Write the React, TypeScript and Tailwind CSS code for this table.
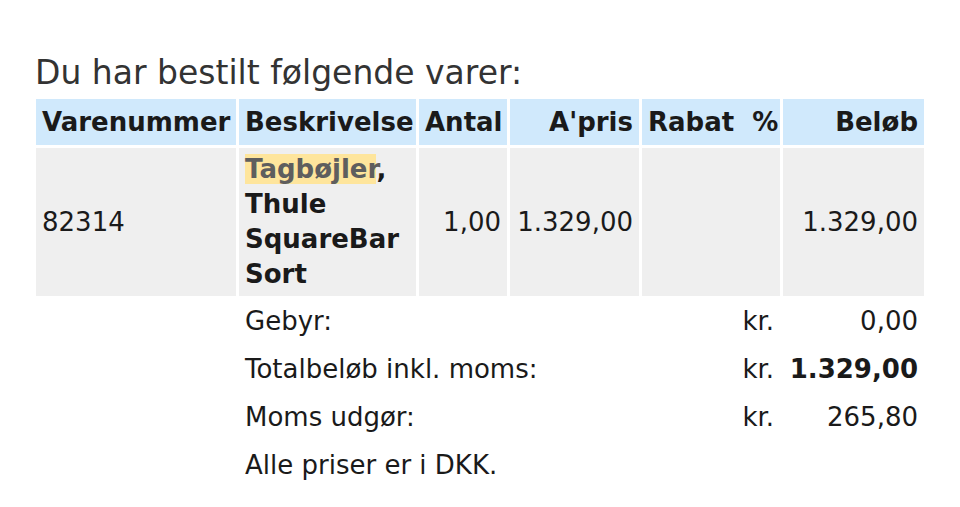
const App = () => {
  const summary = [
    { label: 'Gebyr:', value: '0,00', bold: false },
    { label: 'Totalbeløb inkl. moms:', value: '1.329,00', bold: true },
    { label: 'Moms udgør:', value: '265,80', bold: false },
  ];

  return (
    <div className="min-h-screen bg-white pt-[50px] pl-[33px] font-['DejaVu_Sans',sans-serif] text-[#1a1a1a]">
      {/* overskrift */}
      <h1 className="pl-[2px] text-[33px] leading-[46px] text-[#333]">Du har bestilt følgende varer:</h1>

      <table className="w-[894px] table-fixed border-separate border-spacing-[3px] text-[26px]">
        <thead>
          <tr className="h-[46px] bg-[#d0e9fc] font-bold">
            <th className="w-[200px] px-[6px] text-left">Varenummer</th>
            <th className="w-[177px] px-[6px] text-left whitespace-nowrap">Beskrivelse</th>
            <th className="w-[88px] px-[6px] text-left whitespace-nowrap">Antal</th>
            <th className="w-[129px] px-[6px] text-right">A'pris</th>
            <th className="w-[138px] px-[6px] text-left whitespace-pre">Rabat  %</th>
            <th className="w-[141px] px-[6px] text-right">Beløb</th>
          </tr>
        </thead>
        <tbody>
          {/* vare */}
          <tr className="h-[148px] bg-[#efefef]">
            <td className="px-[6px]">82314</td>
            <td className="px-[6px] font-bold leading-[35px]">
              <span className="bg-[#fee59c] text-[#5e5e5e]">Tagbøjler</span>, Thule SquareBar Sort
            </td>
            <td className="px-[6px] text-right">1,00</td>
            <td className="px-[6px] text-right">1.329,00</td>
            <td className="px-[6px]"></td>
            <td className="px-[6px] text-right">1.329,00</td>
          </tr>

          {/* totaler */}
          {summary.map((row) => (
            <tr key={row.label} className="h-[45px]">
              <td></td>
              <td colSpan={3} className="px-[6px] whitespace-nowrap">{row.label}</td>
              <td className="px-[6px] text-right">kr.</td>
              <td className={`px-[6px] text-right ${row.bold ? 'font-bold' : ''}`}>{row.value}</td>
            </tr>
          ))}
          <tr className="h-[45px]">
            <td></td>
            <td colSpan={5} className="px-[6px]">Alle priser er i DKK.</td>
          </tr>
        </tbody>
      </table>
    </div>
  );
};

export default App;
